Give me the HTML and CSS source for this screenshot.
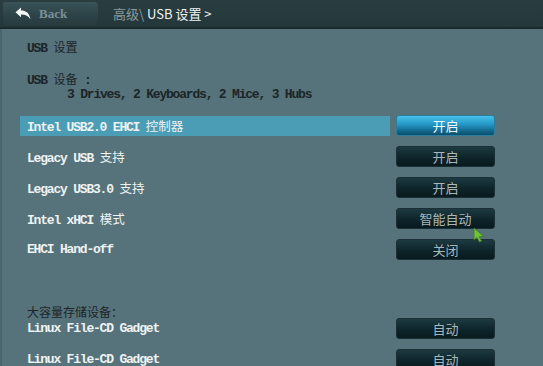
FILE: index.html
```html
<!DOCTYPE html>
<html lang="zh">
<head>
<meta charset="utf-8">
<link rel="stylesheet" href="styles.css">
</head>
<body>
<div class="screen">
  <header class="topbar">
    <div class="back">
      <svg class="back-icon" width="16" height="13" viewBox="0 0 16 13"><path d="M0.5 5.2 L6 0.5 L6 3.4 C11 3.4 14.5 6 15.5 12.5 C13.5 8.8 10.5 7.3 6 7.4 L6 10.2 Z" fill="#f2f6f6"/></svg>
      <span class="back-text">Back</span>
    </div>
    <div class="crumb"><span class="crumb-dim">高级\</span> <span class="crumb-cur">USB 设置 &gt;</span></div>
  </header>
  <main class="content">
    <div class="title">USB <span class="zh">设置</span></div>
    <div class="devices">
      <div class="dark-line first">USB <span class="zh">设备</span> :</div>
      <div class="dark-line indent">3 Drives, 2 Keyboards, 2 Mice, 3 Hubs</div>
    </div>
    <div class="rows">
      <div class="row selected">
        <div class="label">Intel USB2.0 EHCI <span class="zh">控制器</span></div>
        <div class="btn btn-active">开启</div>
      </div>
      <div class="row">
        <div class="label">Legacy USB <span class="zh">支持</span></div>
        <div class="btn">开启</div>
      </div>
      <div class="row">
        <div class="label">Legacy USB3.0 <span class="zh">支持</span></div>
        <div class="btn">开启</div>
      </div>
      <div class="row">
        <div class="label">Intel xHCI <span class="zh">模式</span></div>
        <div class="btn">智能自动</div>
      </div>
      <div class="row">
        <div class="label">EHCI Hand-off</div>
        <div class="btn">关闭</div>
      </div>
    </div>
    <div class="storage-title"><span class="zh">大容量存储设备：</span></div>
    <div class="rows">
      <div class="row">
        <div class="label">Linux File-CD Gadget</div>
        <div class="btn">自动</div>
      </div>
      <div class="row">
        <div class="label">Linux File-CD Gadget</div>
        <div class="btn">自动</div>
      </div>
    </div>
  </main>
  <svg class="cursor" width="12" height="16" viewBox="0 0 12 16"><path d="M1 1 L1 13 L4 10.5 L6.5 15 L8.5 14 L6.2 9.6 L10.5 9.3 Z" fill="#6fc33a" stroke="#3f7a22" stroke-width="0.8"/></svg>
</div>
</body>
</html>
```
FILE: styles.css
```css
html, body {
  margin: 0;
  padding: 0;
}
body {
  width: 543px;
  height: 366px;
  overflow: hidden;
  background: #56727a;
  font-family: "Liberation Mono", "Noto Sans CJK SC", monospace;
}
.screen {
  position: relative;
  width: 543px;
  height: 366px;
  overflow: hidden;
}
.topbar {
  height: 27px;
  background: linear-gradient(#2a3e42, #24373b);
  border-bottom: 2px solid #1b2a2d;
  display: flex;
  align-items: center;
  box-sizing: content-box;
}
.back {
  margin-left: 3px;
  width: 95px;
  height: 23px;
  border-radius: 2px 4px 4px 2px;
  background: linear-gradient(#3a5358, #2c4246 60%, #283c40);
  display: flex;
  align-items: center;
  box-sizing: border-box;
  padding-left: 12px;
}
.back-icon {
  display: block;
}
.back-text {
  margin-left: 8px;
  font-family: "Liberation Serif", serif;
  font-weight: bold;
  font-size: 13px;
  color: #7d9195;
}
.crumb {
  margin-left: 15px;
  font-family: "Noto Sans CJK SC", sans-serif;
  font-size: 13px;
  color: #eef3f3;
  white-space: pre;
}
.crumb-dim {
  color: #8a9c9f;
}
.content {
  border-left: 2px solid #4a656b;
  padding-left: 25px;
  padding-top: 10px;
  height: 366px;
  box-sizing: border-box;
  font-size: 13px;
  font-weight: bold;
  letter-spacing: -1.2px;
}
.zh {
  font-family: "Noto Sans CJK SC", sans-serif;
  font-weight: normal;
  font-size: 12px;
  letter-spacing: 0;
}
.title {
  height: 16px;
  line-height: 16px;
  color: #1c2528;
}
.devices {
  margin-top: 15px;
  color: #1c2528;
}
.dark-line {
  height: 15px;
  line-height: 15px;
  white-space: pre;
}
.dark-line.first {
  height: 17px;
  line-height: 17px;
}
.indent {
  padding-left: 40px;
}
.rows {
  display: flex;
  flex-direction: column;
  gap: 10px;
}
.devices + .rows {
  margin-top: 13px;
}
.row {
  height: 21px;
  display: flex;
  align-items: center;
  margin-left: -7px;
}
.label {
  width: 370px;
  height: 20px;
  line-height: 20px;
  padding-left: 7px;
  box-sizing: border-box;
  color: #eef3f3;
  white-space: pre;
}
.label .zh {
  font-size: 12.5px;
}
.selected .label {
  background: #4b9db5;
}
.btn {
  margin-left: 6px;
  width: 99px;
  height: 21px;
  border-radius: 3px;
  box-sizing: border-box;
  display: flex;
  align-items: center;
  justify-content: center;
  font-family: "Noto Sans CJK SC", sans-serif;
  font-weight: normal;
  font-size: 13px;
  letter-spacing: 0;
  color: #aab7b9;
  background: linear-gradient(#1d3a41, #0f262c 50%, #081a1e);
  border: 1px solid #1a3036;
}
.btn-active {
  color: #eef7fa;
  background: linear-gradient(#45c2ec, #2596c4 45%, #136c92 75%, #0c4e6a);
  border: 1px solid #2b7ea0;
}
.storage-title {
  margin-top: 46px;
  height: 12px;
  line-height: 12px;
  color: #1c2528;
}
.cursor {
  position: absolute;
  left: 473px;
  top: 227px;
}
```
